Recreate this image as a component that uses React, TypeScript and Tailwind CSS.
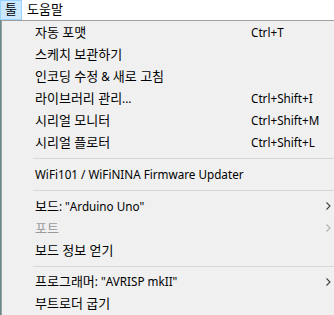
const font = "[font-family:'Noto_Sans','Noto_Sans_CJK_KR',sans-serif]";

type Item =
    | { kind: 'item'; label: string; shortcut?: string; arrow?: boolean; disabled?: boolean }
    | { kind: 'sep' };

const items: Item[] = [
    { kind: 'item', label: '자동 포맷', shortcut: 'Ctrl+T' },
    { kind: 'item', label: '스케치 보관하기' },
    { kind: 'item', label: '인코딩 수정 & 새로 고침' },
    { kind: 'item', label: '라이브러리 관리...', shortcut: 'Ctrl+Shift+I' },
    { kind: 'item', label: '시리얼 모니터', shortcut: 'Ctrl+Shift+M' },
    { kind: 'item', label: '시리얼 플로터', shortcut: 'Ctrl+Shift+L' },
    { kind: 'sep' },
    { kind: 'item', label: 'WiFi101 / WiFiNINA Firmware Updater' },
    { kind: 'sep' },
    { kind: 'item', label: '보드: "Arduino Uno"', arrow: true },
    { kind: 'item', label: '포트', arrow: true, disabled: true },
    { kind: 'item', label: '보드 정보 얻기' },
    { kind: 'sep' },
    { kind: 'item', label: '프로그래머: "AVRISP mkII"', arrow: true },
    { kind: 'item', label: '부트로더 굽기' },
];

// hangul runs are drawn a bit larger, like Malgun Gothic next to Segoe UI
const Label = ({ text }: { text: string }) => {
    const parts = text.split(/([\uAC00-\uD7A3]+(?: [\uAC00-\uD7A3]+)*)/);
    return (
        <>
            {parts.map((p, i) =>
                /[\uAC00-\uD7A3]/.test(p) ? (
                    <span key={i} className="text-[13px]">
                        {p}
                    </span>
                ) : (
                    <span key={i}>{p}</span>
                )
            )}
        </>
    );
};

const Chevron = ({ color }: { color: string }) => (
    <svg width="5" height="8" viewBox="0 0 5 8" className="shrink-0">
        <path d="M0.5 0.5 L4 4 L0.5 7.5" fill="none" stroke={color} strokeWidth="1.1" />
    </svg>
);

export default function App() {
    return (
        <div className={`w-[334px] h-[315px] overflow-hidden bg-white ${font} text-[11.7px] text-black`}>
            <div className="flex h-[20px] items-stretch bg-white">
                <div className="flex w-[22px] items-center justify-center bg-[#cce8ff] border border-[#99d1ff]">
                    <Label text="툴" />
                </div>
                <div className="flex items-center px-[5px]">
                    <Label text="도움말" />
                </div>
            </div>
            <div className="flex h-[295px]">
                <div className="w-px bg-[#5e8c8c]" />
                <div className="flex-1 flex flex-col bg-[#f0f0f0] border-l border-t border-[#a0a0a0] pt-[1px]">
                    {items.map((it, i) =>
                        it.kind === 'sep' ? (
                            <div key={i} className="h-[11px] flex items-center pl-[31px]">
                                <div className="h-px w-full bg-[#d7d7d7]" />
                            </div>
                        ) : (
                            <div key={i} className="flex h-[22px] shrink-0 items-center pl-[33px] pr-[3px]">
                                <div className={`flex-1 whitespace-nowrap ${it.disabled ? 'text-[#9a9a9a]' : ''}`}>
                                    <Label text={it.label} />
                                </div>
                                {it.shortcut && (
                                    <div className="w-[80px] whitespace-nowrap">{it.shortcut}</div>
                                )}
                                {it.arrow && <Chevron color={it.disabled ? '#b0b0b0' : '#404040'} />}
                            </div>
                        )
                    )}
                </div>
            </div>
        </div>
    );
}
